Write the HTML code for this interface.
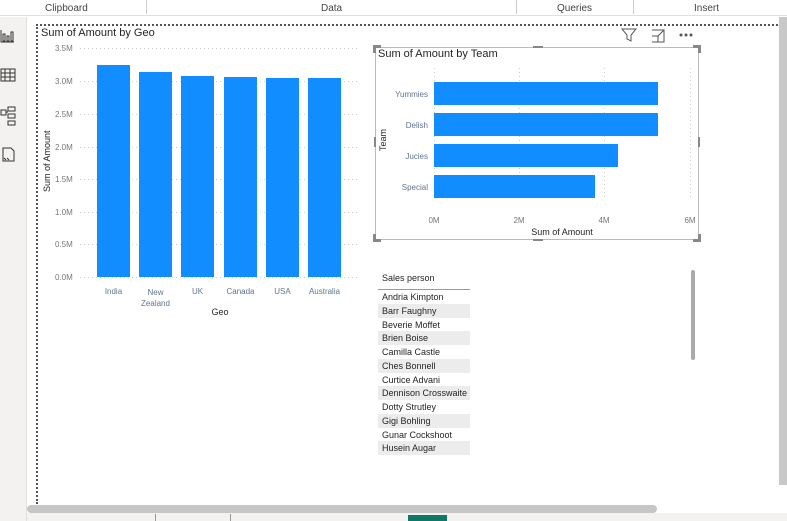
<!DOCTYPE html>
<html><head><style>
*{margin:0;padding:0;box-sizing:border-box}
body{width:787px;height:521px;overflow:hidden;background:#fff;font-family:"Liberation Sans",sans-serif;position:relative}
.a{position:absolute}
.t{position:absolute;font-size:8px;color:#777;white-space:nowrap}
.c{color:#5f7590}
.bar{position:absolute;background:#118dff}
.row{position:absolute;left:378px;width:92px;height:14px;font-size:9px;color:#252423;padding-left:4px;line-height:14px}
.g{background:#ececec}
</style></head><body>
<div class="a" style="left:0;top:0;width:787px;height:16px;background:#fff;border-bottom:1px solid #e1dfdd"></div>
<div class="t" style="left:45px;top:3px;font-size:10px;color:#444">Clipboard</div>
<div class="t" style="left:321px;top:3px;font-size:10px;color:#444">Data</div>
<div class="t" style="left:557px;top:3px;font-size:10px;color:#444">Queries</div>
<div class="t" style="left:694px;top:3px;font-size:10px;color:#444">Insert</div>
<div class="a" style="left:146px;top:0;width:1px;height:14px;background:#ccc"></div>
<div class="a" style="left:516px;top:0;width:1px;height:14px;background:#ccc"></div>
<div class="a" style="left:633px;top:0;width:1px;height:14px;background:#ccc"></div>
<div class="a" style="left:0;top:17px;width:27px;height:504px;background:#f3f2f1;border-right:1px solid #e1dfdd"></div>
<svg class="a" style="left:0;top:28px" width="20" height="140" fill="none" stroke="#333" stroke-width="1">
<path d="M1 2v12h13M3 6v7h2V6zM7 8v5h2V8zM11 4v9h2V4z"/>
<path d="M1 41h14v12H1zM1 45h14M1 49h14M5 41v12M10 41v12"/>
<path d="M1 82h5v5H1zM8 79h7v4H8zM8 86h7v4H8zM8 93h7v4H8zM6 84h2"/>
<path d="M3 120h8l3 3v10H3zM4 130l2 2M7 130l2 2"/>
</svg>
<div class="a" style="left:779px;top:17px;width:8px;height:468px;background:#c8c8c8"></div>
<div class="a" style="left:27px;top:505px;width:630px;height:8px;background:#c6c6c6;border-radius:4px"></div>
<div class="a" style="left:27px;top:513px;width:760px;height:8px;background:#f3f2f1"></div>
<div class="a" style="left:155px;top:514px;width:1px;height:7px;background:#999"></div>
<div class="a" style="left:230px;top:514px;width:1px;height:7px;background:#999"></div>
<div class="a" style="left:408px;top:515px;width:39px;height:6px;background:#117865"></div>
<div class="a" style="left:36px;top:24px;width:742px;height:480px;border-left:2px dotted #555;border-top:2px dotted #555"></div>
<div class="t" style="left:41px;top:27px;font-size:11px;color:#252423">Sum of Amount by Geo</div>
<div class="t" style="top:157px;transform:rotate(-90deg);transform-origin:center;font-size:9px;color:#252423;width:60px;text-align:center;left:17px">Sum of Amount</div>
<div class="t" style="left:55px;top:44px">3.5M</div>
<div class="t" style="left:55px;top:77px">3.0M</div>
<div class="t" style="left:55px;top:110px">2.5M</div>
<div class="t" style="left:55px;top:143px">2.0M</div>
<div class="t" style="left:55px;top:175px">1.5M</div>
<div class="t" style="left:55px;top:208px">1.0M</div>
<div class="t" style="left:55px;top:240px">0.5M</div>
<div class="t" style="left:55px;top:273px">0.0M</div>
<svg class="a" style="left:80px;top:40px" width="280" height="240" stroke="#ccc" stroke-dasharray="1 3">
<path d="M0 8.5h277M0 41.5h277M0 74.5h277M0 107.5h277M0 139.5h277M0 172.5h277M0 204.5h277M0 237.5h277"/></svg>
<div class="bar" style="left:97px;top:65px;width:33px;height:212px"></div>
<div class="bar" style="left:139px;top:72px;width:33px;height:205px"></div>
<div class="bar" style="left:181px;top:76px;width:33px;height:201px"></div>
<div class="bar" style="left:224px;top:77px;width:33px;height:200px"></div>
<div class="bar" style="left:266px;top:78px;width:33px;height:199px"></div>
<div class="bar" style="left:308px;top:78px;width:33px;height:199px"></div>
<div class="t c" style="left:97px;top:287px;width:33px;text-align:center">India</div>
<div class="t c" style="left:135px;top:287px;width:41px;text-align:center;line-height:11px;white-space:normal">New Zealand</div>
<div class="t c" style="left:181px;top:287px;width:33px;text-align:center">UK</div>
<div class="t c" style="left:221px;top:287px;width:39px;text-align:center">Canada</div>
<div class="t c" style="left:266px;top:287px;width:33px;text-align:center">USA</div>
<div class="t c" style="left:303px;top:287px;width:43px;text-align:center">Australia</div>
<div class="t" style="left:205px;top:307px;width:30px;text-align:center;font-size:9px;color:#252423">Geo</div>
<svg class="a" style="left:620px;top:27px" width="80" height="16" fill="none" stroke="#555" stroke-width="1">
<path d="M2 2h14l-5 6v6l-4-2V8z"/><path d="M32 3h12v12H32M32 9h6v6M38 9l6-6M40 3h4v4"/>
<circle cx="61" cy="8" r="1" fill="#555"/><circle cx="66" cy="8" r="1" fill="#555"/><circle cx="71" cy="8" r="1" fill="#555"/></svg>
<div class="a" style="left:375px;top:47px;width:324px;height:193px;border:1px solid #bbb"></div>
<svg class="a" style="left:373px;top:45px" width="328" height="197" fill="#888">
<rect x="0" y="0" width="8" height="3"/><rect x="0" y="0" width="3" height="8"/>
<rect x="320" y="0" width="8" height="3"/><rect x="325" y="0" width="3" height="8"/>
<rect x="0" y="194" width="8" height="3"/><rect x="0" y="189" width="3" height="8"/>
<rect x="320" y="194" width="8" height="3"/><rect x="325" y="189" width="3" height="8"/>
<rect x="160" y="1" width="10" height="2"/><rect x="160" y="194" width="10" height="2"/>
<rect x="1" y="92" width="2" height="10"/><rect x="325" y="92" width="2" height="10"/></svg>
<div class="t" style="left:378px;top:48px;font-size:11px;color:#252423">Sum of Amount by Team</div>
<svg class="a" style="left:430px;top:68px" width="265" height="135" stroke="#ccc" stroke-dasharray="1 3">
<path d="M4.5 0v132M89.5 0v132M174.5 0v132M260.5 0v132"/></svg>
<div class="bar" style="left:434px;top:82px;width:224px;height:23px"></div>
<div class="bar" style="left:434px;top:113px;width:224px;height:23px"></div>
<div class="bar" style="left:434px;top:144px;width:184px;height:23px"></div>
<div class="bar" style="left:434px;top:175px;width:161px;height:23px"></div>
<div class="t c" style="left:378px;top:90px;width:50px;text-align:right">Yummies</div>
<div class="t c" style="left:378px;top:121px;width:50px;text-align:right">Delish</div>
<div class="t c" style="left:378px;top:152px;width:50px;text-align:right">Jucies</div>
<div class="t c" style="left:378px;top:183px;width:50px;text-align:right">Special</div>
<div class="t" style="left:424px;top:216px;width:20px;text-align:center">0M</div>
<div class="t" style="left:509px;top:216px;width:20px;text-align:center">2M</div>
<div class="t" style="left:594px;top:216px;width:20px;text-align:center">4M</div>
<div class="t" style="left:680px;top:216px;width:20px;text-align:center">6M</div>
<div class="t" style="left:522px;top:227px;width:80px;text-align:center;font-size:9px;color:#252423">Sum of Amount</div>
<div class="t" style="left:368px;top:135px;width:30px;text-align:center;font-size:9px;color:#252423;transform:rotate(-90deg)">Team</div>
<div class="t" style="left:382px;top:273px;font-size:9px;color:#252423">Sales person</div>
<div class="a" style="left:378px;top:289px;width:92px;height:1px;background:#999"></div>
<div class="row" style="top:290px">Andria Kimpton</div>
<div class="row g" style="top:304px">Barr Faughny</div>
<div class="row" style="top:318px">Beverie Moffet</div>
<div class="row g" style="top:331px">Brien Boise</div>
<div class="row" style="top:345px">Camilla Castle</div>
<div class="row g" style="top:359px">Ches Bonnell</div>
<div class="row" style="top:373px">Curtice Advani</div>
<div class="row g" style="top:386px">Dennison Crosswaite</div>
<div class="row" style="top:400px">Dotty Strutley</div>
<div class="row g" style="top:414px">Gigi Bohling</div>
<div class="row" style="top:428px">Gunar Cockshoot</div>
<div class="row g" style="top:441px">Husein Augar</div>
<div class="a" style="left:691px;top:270px;width:4px;height:90px;background:#aaa;border-radius:2px"></div>
</body></html>
